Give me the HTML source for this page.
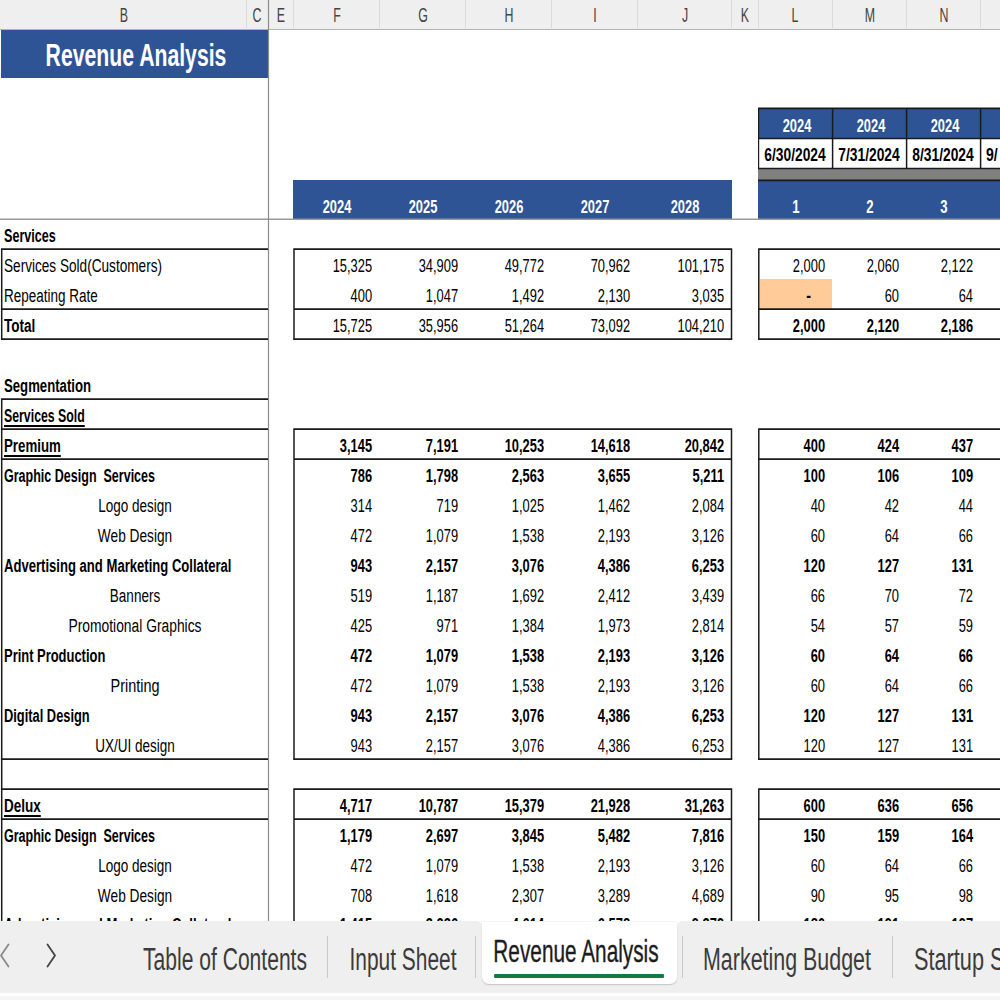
<!DOCTYPE html>
<html lang="en"><head><meta charset="utf-8"><title>Revenue Analysis</title>
<style>
html,body{margin:0;padding:0;background:#fff}
#app{position:relative;width:1000px;height:1000px;overflow:hidden;background:#fff;font-family:'Liberation Sans', sans-serif;color:#000}
.t{position:absolute;white-space:pre;line-height:1;font-size:18px}
.u{text-decoration:underline;text-decoration-thickness:1.7px;text-underline-offset:2.9px}
.r{position:absolute}
.ln{position:absolute;left:0;top:0}
#hdr{left:0;top:0;width:1000px;height:28.5px;background:#efefef;border-bottom:1.5px solid #b4b4b4}
.cs{position:absolute;top:0;width:1px;height:28px;background:#dadada}
#tabs{left:0;top:921.3px;width:1000px;height:71.3px}
#tabs b{position:absolute;top:0;height:100%;background:#efefef}
#tabw{left:0;top:992.6px;width:1000px;height:3.4px;background:#fff}
#tabf{left:0;top:996px;width:1000px;height:4px;background:#f5f5f5}
#act{left:481.6px;top:921.3px;width:195.2px;height:62.5px;background:#fff;border-radius:0 0 7px 7px;box-shadow:0 0.5px 1.5px rgba(0,0,0,.18);clip-path:inset(0 -4px -4px -4px)}
#grn{left:494px;top:973.7px;width:169.8px;height:4.3px;background:#107c41;border-radius:1px}
.ts{position:absolute;top:935.5px;width:1px;height:42px;background:#c8c8c8}
</style></head><body>
<div id="app">
<div class="r" id="hdr"><i class="cs" style="left:246px"></i><i class="cs" style="left:293px"></i><i class="cs" style="left:379px"></i><i class="cs" style="left:465px"></i><i class="cs" style="left:551px"></i><i class="cs" style="left:637px"></i><i class="cs" style="left:731px"></i><i class="cs" style="left:758px"></i><i class="cs" style="left:832px"></i><i class="cs" style="left:906px"></i><i class="cs" style="left:980px"></i></div>
<div class="r" style="left:1px;top:29.5px;width:267px;height:48px;background:#2f5496"></div>
<div class="r" style="left:293px;top:180px;width:438.5px;height:39px;background:#2f5496"></div>
<div class="r" style="left:758px;top:108px;width:242px;height:31px;background:#2f5496"></div>
<div class="r" style="left:758px;top:169px;width:242px;height:11px;background:#808080"></div>
<div class="r" style="left:758px;top:180px;width:242px;height:39px;background:#2f5496"></div>
<div class="r" style="left:759.5px;top:279px;width:72.5px;height:30px;background:#ffcc99"></div>
<svg class="ln" width="1000" height="1000" viewBox="0 0 1000 1000"><line x1="0" y1="219.3" x2="1000" y2="219.3" stroke="#9a9a9a" stroke-width="1.4"/><line x1="268.5" y1="0" x2="268.5" y2="921" stroke="#8c8c8c" stroke-width="1.2"/><line x1="0.95" y1="249.1" x2="268" y2="249.1" stroke="#1a1a1a" stroke-width="1.7"/><line x1="0.95" y1="309.1" x2="268" y2="309.1" stroke="#1a1a1a" stroke-width="1.7"/><line x1="0.95" y1="339.1" x2="268" y2="339.1" stroke="#1a1a1a" stroke-width="1.7"/><line x1="1.7" y1="249.5" x2="1.7" y2="339.5" stroke="#1a1a1a" stroke-width="1.5"/><line x1="0.95" y1="399.1" x2="268" y2="399.1" stroke="#1a1a1a" stroke-width="1.7"/><line x1="0.95" y1="429.1" x2="268" y2="429.1" stroke="#1a1a1a" stroke-width="1.7"/><line x1="0.95" y1="459.1" x2="268" y2="459.1" stroke="#1a1a1a" stroke-width="1.7"/><line x1="0.95" y1="759.1" x2="268" y2="759.1" stroke="#1a1a1a" stroke-width="1.7"/><line x1="0.95" y1="789.1" x2="268" y2="789.1" stroke="#1a1a1a" stroke-width="1.7"/><line x1="0.95" y1="819.1" x2="268" y2="819.1" stroke="#1a1a1a" stroke-width="1.7"/><line x1="1.7" y1="399.5" x2="1.7" y2="921" stroke="#1a1a1a" stroke-width="1.5"/><line x1="293.3" y1="249.1" x2="732.2" y2="249.1" stroke="#1a1a1a" stroke-width="1.7"/><line x1="294" y1="309.1" x2="731.5" y2="309.1" stroke="#1a1a1a" stroke-width="1.7"/><line x1="293.3" y1="339.1" x2="732.2" y2="339.1" stroke="#1a1a1a" stroke-width="1.7"/><line x1="293.3" y1="429.1" x2="732.2" y2="429.1" stroke="#1a1a1a" stroke-width="1.7"/><line x1="294" y1="459.1" x2="731.5" y2="459.1" stroke="#1a1a1a" stroke-width="1.7"/><line x1="293.3" y1="759.1" x2="732.2" y2="759.1" stroke="#1a1a1a" stroke-width="1.7"/><line x1="293.3" y1="789.1" x2="732.2" y2="789.1" stroke="#1a1a1a" stroke-width="1.7"/><line x1="294" y1="819.1" x2="731.5" y2="819.1" stroke="#1a1a1a" stroke-width="1.7"/><line x1="294" y1="249.5" x2="294" y2="339.5" stroke="#1a1a1a" stroke-width="1.5"/><line x1="294" y1="429.5" x2="294" y2="759.5" stroke="#1a1a1a" stroke-width="1.5"/><line x1="294" y1="789.5" x2="294" y2="921" stroke="#1a1a1a" stroke-width="1.5"/><line x1="731.5" y1="249.5" x2="731.5" y2="339.5" stroke="#1a1a1a" stroke-width="1.5"/><line x1="731.5" y1="429.5" x2="731.5" y2="759.5" stroke="#1a1a1a" stroke-width="1.5"/><line x1="731.5" y1="789.5" x2="731.5" y2="921" stroke="#1a1a1a" stroke-width="1.5"/><line x1="758.0999999999999" y1="249.1" x2="1000" y2="249.1" stroke="#1a1a1a" stroke-width="1.7"/><line x1="758.8" y1="309.1" x2="1000" y2="309.1" stroke="#1a1a1a" stroke-width="1.7"/><line x1="758.0999999999999" y1="339.1" x2="1000" y2="339.1" stroke="#1a1a1a" stroke-width="1.7"/><line x1="758.0999999999999" y1="429.1" x2="1000" y2="429.1" stroke="#1a1a1a" stroke-width="1.7"/><line x1="758.8" y1="459.1" x2="1000" y2="459.1" stroke="#1a1a1a" stroke-width="1.7"/><line x1="758.0999999999999" y1="759.1" x2="1000" y2="759.1" stroke="#1a1a1a" stroke-width="1.7"/><line x1="758.0999999999999" y1="789.1" x2="1000" y2="789.1" stroke="#1a1a1a" stroke-width="1.7"/><line x1="758.8" y1="819.1" x2="1000" y2="819.1" stroke="#1a1a1a" stroke-width="1.7"/><line x1="758.8" y1="249.5" x2="758.8" y2="339.5" stroke="#1a1a1a" stroke-width="1.5"/><line x1="758.8" y1="429.5" x2="758.8" y2="759.5" stroke="#1a1a1a" stroke-width="1.5"/><line x1="758.8" y1="789.5" x2="758.8" y2="921" stroke="#1a1a1a" stroke-width="1.5"/><line x1="758" y1="108.3" x2="1000" y2="108.3" stroke="#1a1a1a" stroke-width="1.7"/><line x1="758" y1="138.5" x2="1000" y2="138.5" stroke="#1a1a1a" stroke-width="1.7"/><line x1="758" y1="168.5" x2="1000" y2="168.5" stroke="#1a1a1a" stroke-width="1.7"/><line x1="758" y1="180.3" x2="1000" y2="180.3" stroke="#1a1a1a" stroke-width="1.7"/><line x1="758.6" y1="108" x2="758.6" y2="169" stroke="#1a1a1a" stroke-width="1.2"/><line x1="832.6" y1="108" x2="832.6" y2="169" stroke="#1a1a1a" stroke-width="1.5"/><line x1="906.6" y1="108" x2="906.6" y2="169" stroke="#1a1a1a" stroke-width="1.5"/><line x1="980.6" y1="108" x2="980.6" y2="169" stroke="#1a1a1a" stroke-width="1.5"/></svg>
<span class="t" style="top:227.26px;font-size:18px;font-weight:700;left:3.50px;transform-origin:0 50%;transform:scaleX(0.6993);">Services</span><span class="t" style="top:257.26px;font-size:18px;left:3.50px;transform-origin:0 50%;transform:scaleX(0.7558);">Services Sold(Customers)</span><span class="t" style="top:287.26px;font-size:18px;left:3.50px;transform-origin:0 50%;transform:scaleX(0.7498);">Repeating Rate</span><span class="t" style="top:317.26px;font-size:18px;font-weight:700;left:3.50px;transform-origin:0 50%;transform:scaleX(0.7511);">Total</span><span class="t" style="top:377.26px;font-size:18px;font-weight:700;left:3.50px;transform-origin:0 50%;transform:scaleX(0.731);">Segmentation</span><span class="t u" style="top:407.26px;font-size:18px;font-weight:700;left:3.50px;transform-origin:0 50%;transform:scaleX(0.6843);">Services Sold</span><span class="t u" style="top:437.26px;font-size:18px;font-weight:700;left:3.50px;transform-origin:0 50%;transform:scaleX(0.7374);">Premium</span><span class="t" style="top:467.26px;font-size:18px;font-weight:700;left:3.50px;transform-origin:0 50%;transform:scaleX(0.6955);">Graphic Design  Services</span><span class="t" style="top:497.26px;font-size:18px;left:135.00px;transform:translateX(-50%) scaleX(0.7513);">Logo design</span><span class="t" style="top:527.26px;font-size:18px;left:135.00px;transform:translateX(-50%) scaleX(0.7603);">Web Design</span><span class="t" style="top:557.26px;font-size:18px;font-weight:700;left:3.50px;transform-origin:0 50%;transform:scaleX(0.7267);">Advertising and Marketing Collateral</span><span class="t" style="top:587.26px;font-size:18px;left:135.00px;transform:translateX(-50%) scaleX(0.7502);">Banners</span><span class="t" style="top:617.26px;font-size:18px;left:135.00px;transform:translateX(-50%) scaleX(0.7684);">Promotional Graphics</span><span class="t" style="top:647.26px;font-size:18px;font-weight:700;left:3.50px;transform-origin:0 50%;transform:scaleX(0.7184);">Print Production</span><span class="t" style="top:677.26px;font-size:18px;left:135.00px;transform:translateX(-50%) scaleX(0.8029);">Printing</span><span class="t" style="top:707.26px;font-size:18px;font-weight:700;left:3.50px;transform-origin:0 50%;transform:scaleX(0.7141);">Digital Design</span><span class="t" style="top:737.26px;font-size:18px;left:135.00px;transform:translateX(-50%) scaleX(0.7514);">UX/UI design</span><span class="t u" style="top:797.26px;font-size:18px;font-weight:700;left:3.50px;transform-origin:0 50%;transform:scaleX(0.7505);">Delux</span><span class="t" style="top:827.26px;font-size:18px;font-weight:700;left:3.50px;transform-origin:0 50%;transform:scaleX(0.6955);">Graphic Design  Services</span><span class="t" style="top:857.26px;font-size:18px;left:135.00px;transform:translateX(-50%) scaleX(0.7513);">Logo design</span><span class="t" style="top:887.26px;font-size:18px;left:135.00px;transform:translateX(-50%) scaleX(0.7603);">Web Design</span><span class="t" style="top:916.26px;font-size:18px;font-weight:700;left:3.50px;transform-origin:0 50%;transform:scaleX(0.7267);">Advertising and Marketing Collateral</span><span class="t" style="top:257.26px;font-size:18px;right:628.00px;transform-origin:100% 50%;transform:scaleX(0.715);">15,325</span><span class="t" style="top:257.26px;font-size:18px;right:542.00px;transform-origin:100% 50%;transform:scaleX(0.715);">34,909</span><span class="t" style="top:257.26px;font-size:18px;right:456.00px;transform-origin:100% 50%;transform:scaleX(0.715);">49,772</span><span class="t" style="top:257.26px;font-size:18px;right:370.00px;transform-origin:100% 50%;transform:scaleX(0.715);">70,962</span><span class="t" style="top:257.26px;font-size:18px;right:276.00px;transform-origin:100% 50%;transform:scaleX(0.715);">101,175</span><span class="t" style="top:257.26px;font-size:18px;right:175.00px;transform-origin:100% 50%;transform:scaleX(0.715);">2,000</span><span class="t" style="top:257.26px;font-size:18px;right:101.00px;transform-origin:100% 50%;transform:scaleX(0.715);">2,060</span><span class="t" style="top:257.26px;font-size:18px;right:27.00px;transform-origin:100% 50%;transform:scaleX(0.715);">2,122</span><span class="t" style="top:287.26px;font-size:18px;right:628.00px;transform-origin:100% 50%;transform:scaleX(0.715);">400</span><span class="t" style="top:287.26px;font-size:18px;right:542.00px;transform-origin:100% 50%;transform:scaleX(0.715);">1,047</span><span class="t" style="top:287.26px;font-size:18px;right:456.00px;transform-origin:100% 50%;transform:scaleX(0.715);">1,492</span><span class="t" style="top:287.26px;font-size:18px;right:370.00px;transform-origin:100% 50%;transform:scaleX(0.715);">2,130</span><span class="t" style="top:287.26px;font-size:18px;right:276.00px;transform-origin:100% 50%;transform:scaleX(0.715);">3,035</span><span class="t" style="top:287.26px;font-size:18px;font-weight:700;right:189.50px;transform-origin:100% 50%;transform:scaleX(0.8);">-</span><span class="t" style="top:287.26px;font-size:18px;right:101.00px;transform-origin:100% 50%;transform:scaleX(0.715);">60</span><span class="t" style="top:287.26px;font-size:18px;right:27.00px;transform-origin:100% 50%;transform:scaleX(0.715);">64</span><span class="t" style="top:317.26px;font-size:18px;right:628.00px;transform-origin:100% 50%;transform:scaleX(0.715);">15,725</span><span class="t" style="top:317.26px;font-size:18px;right:542.00px;transform-origin:100% 50%;transform:scaleX(0.715);">35,956</span><span class="t" style="top:317.26px;font-size:18px;right:456.00px;transform-origin:100% 50%;transform:scaleX(0.715);">51,264</span><span class="t" style="top:317.26px;font-size:18px;right:370.00px;transform-origin:100% 50%;transform:scaleX(0.715);">73,092</span><span class="t" style="top:317.26px;font-size:18px;right:276.00px;transform-origin:100% 50%;transform:scaleX(0.715);">104,210</span><span class="t" style="top:317.26px;font-size:18px;font-weight:700;right:175.00px;transform-origin:100% 50%;transform:scaleX(0.715);">2,000</span><span class="t" style="top:317.26px;font-size:18px;font-weight:700;right:101.00px;transform-origin:100% 50%;transform:scaleX(0.715);">2,120</span><span class="t" style="top:317.26px;font-size:18px;font-weight:700;right:27.00px;transform-origin:100% 50%;transform:scaleX(0.715);">2,186</span><span class="t" style="top:437.26px;font-size:18px;font-weight:700;right:628.00px;transform-origin:100% 50%;transform:scaleX(0.715);">3,145</span><span class="t" style="top:437.26px;font-size:18px;font-weight:700;right:542.00px;transform-origin:100% 50%;transform:scaleX(0.715);">7,191</span><span class="t" style="top:437.26px;font-size:18px;font-weight:700;right:456.00px;transform-origin:100% 50%;transform:scaleX(0.715);">10,253</span><span class="t" style="top:437.26px;font-size:18px;font-weight:700;right:370.00px;transform-origin:100% 50%;transform:scaleX(0.715);">14,618</span><span class="t" style="top:437.26px;font-size:18px;font-weight:700;right:276.00px;transform-origin:100% 50%;transform:scaleX(0.715);">20,842</span><span class="t" style="top:437.26px;font-size:18px;font-weight:700;right:175.00px;transform-origin:100% 50%;transform:scaleX(0.715);">400</span><span class="t" style="top:437.26px;font-size:18px;font-weight:700;right:101.00px;transform-origin:100% 50%;transform:scaleX(0.715);">424</span><span class="t" style="top:437.26px;font-size:18px;font-weight:700;right:27.00px;transform-origin:100% 50%;transform:scaleX(0.715);">437</span><span class="t" style="top:467.26px;font-size:18px;font-weight:700;right:628.00px;transform-origin:100% 50%;transform:scaleX(0.715);">786</span><span class="t" style="top:467.26px;font-size:18px;font-weight:700;right:542.00px;transform-origin:100% 50%;transform:scaleX(0.715);">1,798</span><span class="t" style="top:467.26px;font-size:18px;font-weight:700;right:456.00px;transform-origin:100% 50%;transform:scaleX(0.715);">2,563</span><span class="t" style="top:467.26px;font-size:18px;font-weight:700;right:370.00px;transform-origin:100% 50%;transform:scaleX(0.715);">3,655</span><span class="t" style="top:467.26px;font-size:18px;font-weight:700;right:276.00px;transform-origin:100% 50%;transform:scaleX(0.715);">5,211</span><span class="t" style="top:467.26px;font-size:18px;font-weight:700;right:175.00px;transform-origin:100% 50%;transform:scaleX(0.715);">100</span><span class="t" style="top:467.26px;font-size:18px;font-weight:700;right:101.00px;transform-origin:100% 50%;transform:scaleX(0.715);">106</span><span class="t" style="top:467.26px;font-size:18px;font-weight:700;right:27.00px;transform-origin:100% 50%;transform:scaleX(0.715);">109</span><span class="t" style="top:497.26px;font-size:18px;right:628.00px;transform-origin:100% 50%;transform:scaleX(0.715);">314</span><span class="t" style="top:497.26px;font-size:18px;right:542.00px;transform-origin:100% 50%;transform:scaleX(0.715);">719</span><span class="t" style="top:497.26px;font-size:18px;right:456.00px;transform-origin:100% 50%;transform:scaleX(0.715);">1,025</span><span class="t" style="top:497.26px;font-size:18px;right:370.00px;transform-origin:100% 50%;transform:scaleX(0.715);">1,462</span><span class="t" style="top:497.26px;font-size:18px;right:276.00px;transform-origin:100% 50%;transform:scaleX(0.715);">2,084</span><span class="t" style="top:497.26px;font-size:18px;right:175.00px;transform-origin:100% 50%;transform:scaleX(0.715);">40</span><span class="t" style="top:497.26px;font-size:18px;right:101.00px;transform-origin:100% 50%;transform:scaleX(0.715);">42</span><span class="t" style="top:497.26px;font-size:18px;right:27.00px;transform-origin:100% 50%;transform:scaleX(0.715);">44</span><span class="t" style="top:527.26px;font-size:18px;right:628.00px;transform-origin:100% 50%;transform:scaleX(0.715);">472</span><span class="t" style="top:527.26px;font-size:18px;right:542.00px;transform-origin:100% 50%;transform:scaleX(0.715);">1,079</span><span class="t" style="top:527.26px;font-size:18px;right:456.00px;transform-origin:100% 50%;transform:scaleX(0.715);">1,538</span><span class="t" style="top:527.26px;font-size:18px;right:370.00px;transform-origin:100% 50%;transform:scaleX(0.715);">2,193</span><span class="t" style="top:527.26px;font-size:18px;right:276.00px;transform-origin:100% 50%;transform:scaleX(0.715);">3,126</span><span class="t" style="top:527.26px;font-size:18px;right:175.00px;transform-origin:100% 50%;transform:scaleX(0.715);">60</span><span class="t" style="top:527.26px;font-size:18px;right:101.00px;transform-origin:100% 50%;transform:scaleX(0.715);">64</span><span class="t" style="top:527.26px;font-size:18px;right:27.00px;transform-origin:100% 50%;transform:scaleX(0.715);">66</span><span class="t" style="top:557.26px;font-size:18px;font-weight:700;right:628.00px;transform-origin:100% 50%;transform:scaleX(0.715);">943</span><span class="t" style="top:557.26px;font-size:18px;font-weight:700;right:542.00px;transform-origin:100% 50%;transform:scaleX(0.715);">2,157</span><span class="t" style="top:557.26px;font-size:18px;font-weight:700;right:456.00px;transform-origin:100% 50%;transform:scaleX(0.715);">3,076</span><span class="t" style="top:557.26px;font-size:18px;font-weight:700;right:370.00px;transform-origin:100% 50%;transform:scaleX(0.715);">4,386</span><span class="t" style="top:557.26px;font-size:18px;font-weight:700;right:276.00px;transform-origin:100% 50%;transform:scaleX(0.715);">6,253</span><span class="t" style="top:557.26px;font-size:18px;font-weight:700;right:175.00px;transform-origin:100% 50%;transform:scaleX(0.715);">120</span><span class="t" style="top:557.26px;font-size:18px;font-weight:700;right:101.00px;transform-origin:100% 50%;transform:scaleX(0.715);">127</span><span class="t" style="top:557.26px;font-size:18px;font-weight:700;right:27.00px;transform-origin:100% 50%;transform:scaleX(0.715);">131</span><span class="t" style="top:587.26px;font-size:18px;right:628.00px;transform-origin:100% 50%;transform:scaleX(0.715);">519</span><span class="t" style="top:587.26px;font-size:18px;right:542.00px;transform-origin:100% 50%;transform:scaleX(0.715);">1,187</span><span class="t" style="top:587.26px;font-size:18px;right:456.00px;transform-origin:100% 50%;transform:scaleX(0.715);">1,692</span><span class="t" style="top:587.26px;font-size:18px;right:370.00px;transform-origin:100% 50%;transform:scaleX(0.715);">2,412</span><span class="t" style="top:587.26px;font-size:18px;right:276.00px;transform-origin:100% 50%;transform:scaleX(0.715);">3,439</span><span class="t" style="top:587.26px;font-size:18px;right:175.00px;transform-origin:100% 50%;transform:scaleX(0.715);">66</span><span class="t" style="top:587.26px;font-size:18px;right:101.00px;transform-origin:100% 50%;transform:scaleX(0.715);">70</span><span class="t" style="top:587.26px;font-size:18px;right:27.00px;transform-origin:100% 50%;transform:scaleX(0.715);">72</span><span class="t" style="top:617.26px;font-size:18px;right:628.00px;transform-origin:100% 50%;transform:scaleX(0.715);">425</span><span class="t" style="top:617.26px;font-size:18px;right:542.00px;transform-origin:100% 50%;transform:scaleX(0.715);">971</span><span class="t" style="top:617.26px;font-size:18px;right:456.00px;transform-origin:100% 50%;transform:scaleX(0.715);">1,384</span><span class="t" style="top:617.26px;font-size:18px;right:370.00px;transform-origin:100% 50%;transform:scaleX(0.715);">1,973</span><span class="t" style="top:617.26px;font-size:18px;right:276.00px;transform-origin:100% 50%;transform:scaleX(0.715);">2,814</span><span class="t" style="top:617.26px;font-size:18px;right:175.00px;transform-origin:100% 50%;transform:scaleX(0.715);">54</span><span class="t" style="top:617.26px;font-size:18px;right:101.00px;transform-origin:100% 50%;transform:scaleX(0.715);">57</span><span class="t" style="top:617.26px;font-size:18px;right:27.00px;transform-origin:100% 50%;transform:scaleX(0.715);">59</span><span class="t" style="top:647.26px;font-size:18px;font-weight:700;right:628.00px;transform-origin:100% 50%;transform:scaleX(0.715);">472</span><span class="t" style="top:647.26px;font-size:18px;font-weight:700;right:542.00px;transform-origin:100% 50%;transform:scaleX(0.715);">1,079</span><span class="t" style="top:647.26px;font-size:18px;font-weight:700;right:456.00px;transform-origin:100% 50%;transform:scaleX(0.715);">1,538</span><span class="t" style="top:647.26px;font-size:18px;font-weight:700;right:370.00px;transform-origin:100% 50%;transform:scaleX(0.715);">2,193</span><span class="t" style="top:647.26px;font-size:18px;font-weight:700;right:276.00px;transform-origin:100% 50%;transform:scaleX(0.715);">3,126</span><span class="t" style="top:647.26px;font-size:18px;font-weight:700;right:175.00px;transform-origin:100% 50%;transform:scaleX(0.715);">60</span><span class="t" style="top:647.26px;font-size:18px;font-weight:700;right:101.00px;transform-origin:100% 50%;transform:scaleX(0.715);">64</span><span class="t" style="top:647.26px;font-size:18px;font-weight:700;right:27.00px;transform-origin:100% 50%;transform:scaleX(0.715);">66</span><span class="t" style="top:677.26px;font-size:18px;right:628.00px;transform-origin:100% 50%;transform:scaleX(0.715);">472</span><span class="t" style="top:677.26px;font-size:18px;right:542.00px;transform-origin:100% 50%;transform:scaleX(0.715);">1,079</span><span class="t" style="top:677.26px;font-size:18px;right:456.00px;transform-origin:100% 50%;transform:scaleX(0.715);">1,538</span><span class="t" style="top:677.26px;font-size:18px;right:370.00px;transform-origin:100% 50%;transform:scaleX(0.715);">2,193</span><span class="t" style="top:677.26px;font-size:18px;right:276.00px;transform-origin:100% 50%;transform:scaleX(0.715);">3,126</span><span class="t" style="top:677.26px;font-size:18px;right:175.00px;transform-origin:100% 50%;transform:scaleX(0.715);">60</span><span class="t" style="top:677.26px;font-size:18px;right:101.00px;transform-origin:100% 50%;transform:scaleX(0.715);">64</span><span class="t" style="top:677.26px;font-size:18px;right:27.00px;transform-origin:100% 50%;transform:scaleX(0.715);">66</span><span class="t" style="top:707.26px;font-size:18px;font-weight:700;right:628.00px;transform-origin:100% 50%;transform:scaleX(0.715);">943</span><span class="t" style="top:707.26px;font-size:18px;font-weight:700;right:542.00px;transform-origin:100% 50%;transform:scaleX(0.715);">2,157</span><span class="t" style="top:707.26px;font-size:18px;font-weight:700;right:456.00px;transform-origin:100% 50%;transform:scaleX(0.715);">3,076</span><span class="t" style="top:707.26px;font-size:18px;font-weight:700;right:370.00px;transform-origin:100% 50%;transform:scaleX(0.715);">4,386</span><span class="t" style="top:707.26px;font-size:18px;font-weight:700;right:276.00px;transform-origin:100% 50%;transform:scaleX(0.715);">6,253</span><span class="t" style="top:707.26px;font-size:18px;font-weight:700;right:175.00px;transform-origin:100% 50%;transform:scaleX(0.715);">120</span><span class="t" style="top:707.26px;font-size:18px;font-weight:700;right:101.00px;transform-origin:100% 50%;transform:scaleX(0.715);">127</span><span class="t" style="top:707.26px;font-size:18px;font-weight:700;right:27.00px;transform-origin:100% 50%;transform:scaleX(0.715);">131</span><span class="t" style="top:737.26px;font-size:18px;right:628.00px;transform-origin:100% 50%;transform:scaleX(0.715);">943</span><span class="t" style="top:737.26px;font-size:18px;right:542.00px;transform-origin:100% 50%;transform:scaleX(0.715);">2,157</span><span class="t" style="top:737.26px;font-size:18px;right:456.00px;transform-origin:100% 50%;transform:scaleX(0.715);">3,076</span><span class="t" style="top:737.26px;font-size:18px;right:370.00px;transform-origin:100% 50%;transform:scaleX(0.715);">4,386</span><span class="t" style="top:737.26px;font-size:18px;right:276.00px;transform-origin:100% 50%;transform:scaleX(0.715);">6,253</span><span class="t" style="top:737.26px;font-size:18px;right:175.00px;transform-origin:100% 50%;transform:scaleX(0.715);">120</span><span class="t" style="top:737.26px;font-size:18px;right:101.00px;transform-origin:100% 50%;transform:scaleX(0.715);">127</span><span class="t" style="top:737.26px;font-size:18px;right:27.00px;transform-origin:100% 50%;transform:scaleX(0.715);">131</span><span class="t" style="top:797.26px;font-size:18px;font-weight:700;right:628.00px;transform-origin:100% 50%;transform:scaleX(0.715);">4,717</span><span class="t" style="top:797.26px;font-size:18px;font-weight:700;right:542.00px;transform-origin:100% 50%;transform:scaleX(0.715);">10,787</span><span class="t" style="top:797.26px;font-size:18px;font-weight:700;right:456.00px;transform-origin:100% 50%;transform:scaleX(0.715);">15,379</span><span class="t" style="top:797.26px;font-size:18px;font-weight:700;right:370.00px;transform-origin:100% 50%;transform:scaleX(0.715);">21,928</span><span class="t" style="top:797.26px;font-size:18px;font-weight:700;right:276.00px;transform-origin:100% 50%;transform:scaleX(0.715);">31,263</span><span class="t" style="top:797.26px;font-size:18px;font-weight:700;right:175.00px;transform-origin:100% 50%;transform:scaleX(0.715);">600</span><span class="t" style="top:797.26px;font-size:18px;font-weight:700;right:101.00px;transform-origin:100% 50%;transform:scaleX(0.715);">636</span><span class="t" style="top:797.26px;font-size:18px;font-weight:700;right:27.00px;transform-origin:100% 50%;transform:scaleX(0.715);">656</span><span class="t" style="top:827.26px;font-size:18px;font-weight:700;right:628.00px;transform-origin:100% 50%;transform:scaleX(0.715);">1,179</span><span class="t" style="top:827.26px;font-size:18px;font-weight:700;right:542.00px;transform-origin:100% 50%;transform:scaleX(0.715);">2,697</span><span class="t" style="top:827.26px;font-size:18px;font-weight:700;right:456.00px;transform-origin:100% 50%;transform:scaleX(0.715);">3,845</span><span class="t" style="top:827.26px;font-size:18px;font-weight:700;right:370.00px;transform-origin:100% 50%;transform:scaleX(0.715);">5,482</span><span class="t" style="top:827.26px;font-size:18px;font-weight:700;right:276.00px;transform-origin:100% 50%;transform:scaleX(0.715);">7,816</span><span class="t" style="top:827.26px;font-size:18px;font-weight:700;right:175.00px;transform-origin:100% 50%;transform:scaleX(0.715);">150</span><span class="t" style="top:827.26px;font-size:18px;font-weight:700;right:101.00px;transform-origin:100% 50%;transform:scaleX(0.715);">159</span><span class="t" style="top:827.26px;font-size:18px;font-weight:700;right:27.00px;transform-origin:100% 50%;transform:scaleX(0.715);">164</span><span class="t" style="top:857.26px;font-size:18px;right:628.00px;transform-origin:100% 50%;transform:scaleX(0.715);">472</span><span class="t" style="top:857.26px;font-size:18px;right:542.00px;transform-origin:100% 50%;transform:scaleX(0.715);">1,079</span><span class="t" style="top:857.26px;font-size:18px;right:456.00px;transform-origin:100% 50%;transform:scaleX(0.715);">1,538</span><span class="t" style="top:857.26px;font-size:18px;right:370.00px;transform-origin:100% 50%;transform:scaleX(0.715);">2,193</span><span class="t" style="top:857.26px;font-size:18px;right:276.00px;transform-origin:100% 50%;transform:scaleX(0.715);">3,126</span><span class="t" style="top:857.26px;font-size:18px;right:175.00px;transform-origin:100% 50%;transform:scaleX(0.715);">60</span><span class="t" style="top:857.26px;font-size:18px;right:101.00px;transform-origin:100% 50%;transform:scaleX(0.715);">64</span><span class="t" style="top:857.26px;font-size:18px;right:27.00px;transform-origin:100% 50%;transform:scaleX(0.715);">66</span><span class="t" style="top:887.26px;font-size:18px;right:628.00px;transform-origin:100% 50%;transform:scaleX(0.715);">708</span><span class="t" style="top:887.26px;font-size:18px;right:542.00px;transform-origin:100% 50%;transform:scaleX(0.715);">1,618</span><span class="t" style="top:887.26px;font-size:18px;right:456.00px;transform-origin:100% 50%;transform:scaleX(0.715);">2,307</span><span class="t" style="top:887.26px;font-size:18px;right:370.00px;transform-origin:100% 50%;transform:scaleX(0.715);">3,289</span><span class="t" style="top:887.26px;font-size:18px;right:276.00px;transform-origin:100% 50%;transform:scaleX(0.715);">4,689</span><span class="t" style="top:887.26px;font-size:18px;right:175.00px;transform-origin:100% 50%;transform:scaleX(0.715);">90</span><span class="t" style="top:887.26px;font-size:18px;right:101.00px;transform-origin:100% 50%;transform:scaleX(0.715);">95</span><span class="t" style="top:887.26px;font-size:18px;right:27.00px;transform-origin:100% 50%;transform:scaleX(0.715);">98</span><span class="t" style="top:916.26px;font-size:18px;font-weight:700;right:628.00px;transform-origin:100% 50%;transform:scaleX(0.715);">1,415</span><span class="t" style="top:916.26px;font-size:18px;font-weight:700;right:542.00px;transform-origin:100% 50%;transform:scaleX(0.715);">3,236</span><span class="t" style="top:916.26px;font-size:18px;font-weight:700;right:456.00px;transform-origin:100% 50%;transform:scaleX(0.715);">4,614</span><span class="t" style="top:916.26px;font-size:18px;font-weight:700;right:370.00px;transform-origin:100% 50%;transform:scaleX(0.715);">6,578</span><span class="t" style="top:916.26px;font-size:18px;font-weight:700;right:276.00px;transform-origin:100% 50%;transform:scaleX(0.715);">9,379</span><span class="t" style="top:916.26px;font-size:18px;font-weight:700;right:175.00px;transform-origin:100% 50%;transform:scaleX(0.715);">180</span><span class="t" style="top:916.26px;font-size:18px;font-weight:700;right:101.00px;transform-origin:100% 50%;transform:scaleX(0.715);">191</span><span class="t" style="top:916.26px;font-size:18px;font-weight:700;right:27.00px;transform-origin:100% 50%;transform:scaleX(0.715);">197</span><span class="t" style="top:197.76px;font-size:18px;font-weight:700;color:#fff;left:337.20px;transform:translateX(-50%) scaleX(0.7142);">2024</span><span class="t" style="top:197.76px;font-size:18px;font-weight:700;color:#fff;left:423.20px;transform:translateX(-50%) scaleX(0.7142);">2025</span><span class="t" style="top:197.76px;font-size:18px;font-weight:700;color:#fff;left:509.20px;transform:translateX(-50%) scaleX(0.7142);">2026</span><span class="t" style="top:197.76px;font-size:18px;font-weight:700;color:#fff;left:594.80px;transform:translateX(-50%) scaleX(0.7142);">2027</span><span class="t" style="top:197.76px;font-size:18px;font-weight:700;color:#fff;left:684.90px;transform:translateX(-50%) scaleX(0.7142);">2028</span><span class="t" style="top:197.76px;font-size:18px;font-weight:700;color:#fff;left:795.80px;transform:translateX(-50%) scaleX(0.73);">1</span><span class="t" style="top:197.76px;font-size:18px;font-weight:700;color:#fff;left:869.80px;transform:translateX(-50%) scaleX(0.73);">2</span><span class="t" style="top:197.76px;font-size:18px;font-weight:700;color:#fff;left:943.80px;transform:translateX(-50%) scaleX(0.73);">3</span><span class="t" style="top:116.76px;font-size:18px;font-weight:700;color:#fff;left:796.70px;transform:translateX(-50%) scaleX(0.7142);">2024</span><span class="t" style="top:146.26px;font-size:18px;font-weight:700;left:795.00px;transform:translateX(-50%) scaleX(0.768);">6/30/2024</span><span class="t" style="top:116.76px;font-size:18px;font-weight:700;color:#fff;left:870.70px;transform:translateX(-50%) scaleX(0.7142);">2024</span><span class="t" style="top:146.26px;font-size:18px;font-weight:700;left:869.00px;transform:translateX(-50%) scaleX(0.768);">7/31/2024</span><span class="t" style="top:116.76px;font-size:18px;font-weight:700;color:#fff;left:944.70px;transform:translateX(-50%) scaleX(0.7142);">2024</span><span class="t" style="top:146.26px;font-size:18px;font-weight:700;left:943.00px;transform:translateX(-50%) scaleX(0.768);">8/31/2024</span><span class="t" style="top:146.26px;font-size:18px;font-weight:700;left:985.50px;transform-origin:0 50%;transform:scaleX(0.78);">9/</span><span class="t" style="top:39.76px;font-size:31px;font-weight:700;color:#fff;left:135.60px;transform:translateX(-50%) scaleX(0.6843);">Revenue Analysis</span><span class="t" style="top:5.27px;font-size:20px;color:#444;left:124.30px;transform:translateX(-50%) scaleX(0.62);">B</span><span class="t" style="top:5.27px;font-size:20px;color:#444;left:257.20px;transform:translateX(-50%) scaleX(0.62);">C</span><span class="t" style="top:5.27px;font-size:20px;color:#444;left:281.20px;transform:translateX(-50%) scaleX(0.62);">E</span><span class="t" style="top:5.27px;font-size:20px;color:#444;left:336.50px;transform:translateX(-50%) scaleX(0.62);">F</span><span class="t" style="top:5.27px;font-size:20px;color:#444;left:422.50px;transform:translateX(-50%) scaleX(0.62);">G</span><span class="t" style="top:5.27px;font-size:20px;color:#444;left:508.70px;transform:translateX(-50%) scaleX(0.62);">H</span><span class="t" style="top:5.27px;font-size:20px;color:#444;left:594.60px;transform:translateX(-50%) scaleX(0.62);">I</span><span class="t" style="top:5.27px;font-size:20px;color:#444;left:685.00px;transform:translateX(-50%) scaleX(0.62);">J</span><span class="t" style="top:5.27px;font-size:20px;color:#444;left:745.00px;transform:translateX(-50%) scaleX(0.62);">K</span><span class="t" style="top:5.27px;font-size:20px;color:#444;left:795.20px;transform:translateX(-50%) scaleX(0.62);">L</span><span class="t" style="top:5.27px;font-size:20px;color:#444;left:869.50px;transform:translateX(-50%) scaleX(0.62);">M</span><span class="t" style="top:5.27px;font-size:20px;color:#444;left:943.50px;transform:translateX(-50%) scaleX(0.62);">N</span>
<div class="r" id="tabs"><b style="left:0;width:481.6px;border-top-right-radius:5.5px"></b><b style="left:481.6px;width:195.2px"></b><b style="left:676.8px;width:323.2px;border-top-left-radius:5.5px"></b></div><div class="r" id="tabw"></div><div class="r" id="tabf"></div>
<div class="r" id="act"></div><div class="r" id="grn"></div>
<i class="ts" style="left:327.3px"></i><i class="ts" style="left:475px"></i><i class="ts" style="left:682px"></i><i class="ts" style="left:892px"></i>
<svg class="ln" width="1000" height="1000" viewBox="0 0 1000 1000" fill="none" stroke-linecap="round" stroke-linejoin="round">
<path d="M8.5 944.5 L1 955.5 L8.5 966.5" stroke="#8a8a8a" stroke-width="1.8"/>
<path d="M47.5 944.5 L55 955.5 L47.5 966.5" stroke="#444" stroke-width="1.8"/>
</svg>
<span class="t" style="top:943.76px;font-size:31px;color:#3b3b3b;left:224.50px;transform:translateX(-50%) scaleX(0.6797);">Table of Contents</span><span class="t" style="top:943.76px;font-size:31px;color:#3b3b3b;left:402.50px;transform:translateX(-50%) scaleX(0.6747);">Input Sheet</span><span class="t" style="top:936.39px;font-size:31.2px;color:#1c1c1c;-webkit-text-stroke:0.35px #1c1c1c;left:576.20px;transform:translateX(-50%) scaleX(0.6667);">Revenue Analysis</span><span class="t" style="top:943.76px;font-size:31px;color:#3b3b3b;left:787.20px;transform:translateX(-50%) scaleX(0.6914);">Marketing Budget</span><span class="t" style="top:943.76px;font-size:31px;color:#3b3b3b;left:914.00px;transform-origin:0 50%;transform:scaleX(0.7);">Startup S</span>
</div>
</body></html>
